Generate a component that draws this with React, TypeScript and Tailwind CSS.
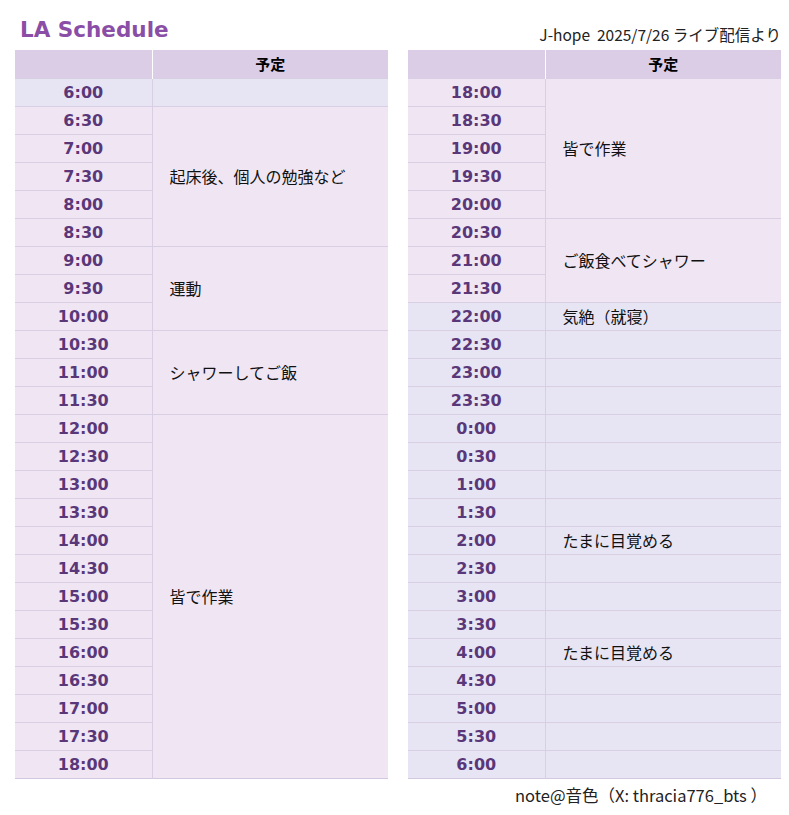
import React from "react";

type Block = { times: string[]; text: string; tone: "pink" | "blue" };

const left: Block[] = [
  { times: ["6:00"], text: "", tone: "blue" },
  { times: ["6:30", "7:00", "7:30", "8:00", "8:30"], text: "起床後、個人の勉強など", tone: "pink" },
  { times: ["9:00", "9:30", "10:00"], text: "運動", tone: "pink" },
  { times: ["10:30", "11:00", "11:30"], text: "シャワーしてご飯", tone: "pink" },
  {
    times: ["12:00", "12:30", "13:00", "13:30", "14:00", "14:30", "15:00", "15:30", "16:00", "16:30", "17:00", "17:30", "18:00"],
    text: "皆で作業",
    tone: "pink",
  },
];

const single = (t: string, text = ""): Block => ({ times: [t], text, tone: "blue" });

const right: Block[] = [
  { times: ["18:00", "18:30", "19:00", "19:30", "20:00"], text: "皆で作業", tone: "pink" },
  { times: ["20:30", "21:00", "21:30"], text: "ご飯食べてシャワー", tone: "pink" },
  single("22:00", "気絶（就寝）"),
  single("22:30"),
  single("23:00"),
  single("23:30"),
  single("0:00"),
  single("0:30"),
  single("1:00"),
  single("1:30"),
  single("2:00", "たまに目覚める"),
  single("2:30"),
  single("3:00"),
  single("3:30"),
  single("4:00", "たまに目覚める"),
  single("4:30"),
  single("5:00"),
  single("5:30"),
  single("6:00"),
];

function ScheduleTable({ blocks }: { blocks: Block[] }) {
  return (
    <table className="w-[373px] shrink-0 border-collapse table-fixed">
      <thead>
        <tr>
          <th className="w-[137px] h-[28px] bg-[#dccde6] border-r border-white p-0"></th>
          <th className="h-[28px] bg-[#dccde6] p-0 text-[15px] font-bold text-black">予定</th>
        </tr>
      </thead>
      <tbody>
        {blocks.map((b, bi) =>
          b.times.map((t, i) => {
            const bg = b.tone === "pink" ? "bg-[#f0e6f3]" : "bg-[#e7e5f3]";
            return (
              <tr key={bi + "-" + t}>
                <td
                  className={`${bg} h-[28px] p-0 pt-[2px] text-center text-[16px] font-bold text-[#5a3779] border-t border-r border-[#d8cfe5] [font-family:'DejaVu_Sans',Verdana,sans-serif] leading-none`}
                >
                  {t}
                </td>
                {i === 0 && (
                  <td
                    rowSpan={b.times.length}
                    className={`${bg} p-0 pl-[17px] text-[16px] text-[#111] border-t border-[#d8cfe5] align-middle`}
                  >
                    {b.text}
                  </td>
                )}
              </tr>
            );
          })
        )}
        <tr>
          <td colSpan={2} className="p-0 h-0 border-t border-[#d3c8e0]"></td>
        </tr>
      </tbody>
    </table>
  );
}

export default function App() {
  return (
    <div className="w-[789px] h-[815px] bg-white pl-[15px] [font-family:'Noto_Sans_CJK_JP','Noto_Sans',sans-serif]">
      <div className="w-[766px] h-[50px] flex items-end justify-between pb-[8px]">
        <h1 className="pl-[5px] pb-[2px] text-[21.5px] font-bold text-[#8a4ea6] leading-none [font-family:'DejaVu_Sans',Verdana,sans-serif]">
          LA Schedule
        </h1>
        <div className="text-[15.5px] text-[#222] leading-none">
          J-hope&nbsp;&nbsp;2025/7/26 ライブ配信より
        </div>
      </div>
      <div className="flex gap-[20px]">
        <ScheduleTable blocks={left} />
        <ScheduleTable blocks={right} />
      </div>
      <div className="w-[752px] flex justify-end pt-[8px] text-[16.5px] text-[#222] leading-none">
        note@音色（X: thracia776_bts ）
      </div>
    </div>
  );
}
